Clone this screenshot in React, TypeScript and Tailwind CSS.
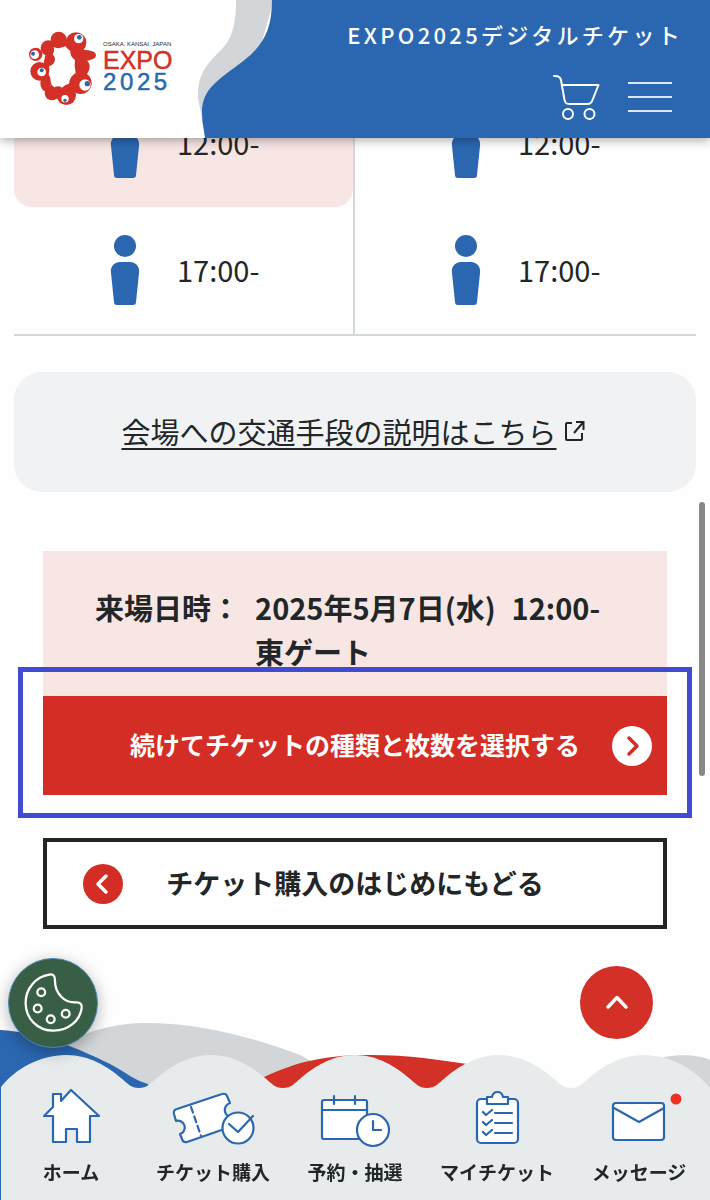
import type { ReactNode } from "react";

const slots = ["12:00-", "17:00-"];

export default function App() {
  return (
    <div className="min-h-screen bg-[#fefefe] text-[#222627] font-['Noto_Sans_CJK_JP','Noto_Sans',sans-serif] flex flex-col overflow-x-hidden">
      <Header />

      <main className="-mt-[58px] px-3.5 pb-[271px]">
        <SlotTable />

        <div className="mt-9 flex h-[120px] items-center justify-center rounded-[28px] bg-[#f0f2f4] pb-0.5 pr-1">
          <a href="#access" className="flex items-center gap-2 text-[29px] leading-10">
            <span className="underline decoration-2 underline-offset-4">会場への交通手段の説明はこちら</span>
            <ExternalIcon />
          </a>
        </div>

        <section className="mx-[29px] mt-[59px]">
          <dl className="flex h-[145px] gap-[15px] bg-[#f8e6e5] pl-[52px] pt-[34px] text-[29px] font-bold leading-[44px]">
            <dt>来場日時：</dt>
            <dd>
              2025年5月7日(水)<span className="ml-4">12:00-</span>
              <br />
              東ゲート
            </dd>
          </dl>

          <div className="relative">
            <button className="grid h-[99px] w-full grid-cols-[40px_1fr_40px] items-center bg-[#d32d26] px-[15px] text-white">
              <span />
              <span className="whitespace-nowrap pb-0.5 text-center text-[25px] font-bold">
                続けてチケットの種類と枚数を選択する
              </span>
              <Round className="bg-white text-[#d32d26]">
                <path d="M17 12l8 8-8 8" />
              </Round>
            </button>
            <div className="pointer-events-none absolute -inset-x-[25px] -bottom-[23px] -top-[29px] border-[5px] border-[#404bd0]" />
          </div>

          <button className="mt-[43px] grid h-[91px] w-full grid-cols-[40px_1fr_40px] items-center border-4 border-[#222627] px-9">
            <Round className="bg-[#d32d26] text-white">
              <path d="M23 12l-8 8 8 8" />
            </Round>
            <span className="whitespace-nowrap text-center text-[27px] font-bold">
              チケット購入のはじめにもどる
            </span>
            <span />
          </button>
        </section>
      </main>

      <BottomNav />

      <button
        aria-label="Cookie"
        className="fixed bottom-[152px] left-2 z-20 h-[90px] w-[90px] rounded-full border border-[#4a86b8] bg-[#385f45] shadow-[0_4px_16px_rgba(0,0,0,0.3)]"
      >
        <CookieIcon />
      </button>

      <a
        href="#top"
        aria-label="ページの先頭へ"
        className="fixed bottom-[161px] right-[57px] z-20 flex h-[73px] w-[73px] items-center justify-center rounded-full bg-[#d33027]"
      >
        <svg width="24" height="16" viewBox="0 0 24 16" fill="none" stroke="#fff" strokeWidth="3.5" strokeLinecap="round" strokeLinejoin="round">
          <path d="M3 12l9-9.500 9 9.500" />
        </svg>
      </a>

      {/* scroll thumb */}
      <div className="fixed right-[5px] top-[502px] z-20 h-[274px] w-1.5 rounded-full bg-[#888]" />
    </div>
  );
}

function Header() {
  return (
    <header id="top" className="relative z-10 flex h-[138px] bg-white shadow-[0_2px_10px_rgba(0,0,0,0.35)]">
      <a href="#home" aria-label="EXPO 2025" className="flex w-[196px] items-start pl-[29px] pt-[31px]">
        <LogoMark />
        <span className="ml-[7px] flex flex-col whitespace-nowrap pt-[9px] font-['Liberation_Sans',sans-serif]">
          <span className="text-[6px] leading-[9px]">OSAKA, KANSAI, JAPAN</span>
          <span className="text-[25px] leading-[22px] text-[#d33027] [-webkit-text-stroke:0.5px_#d33027]">EXPO</span>
          <span className="text-[24px] leading-[22px] tracking-[0.15em] text-[#2b67b1] [-webkit-text-stroke:0.5px_#2b67b1]">2025</span>
        </span>
      </a>

      <svg className="h-full w-20 shrink-0" viewBox="0 0 80 138" preserveAspectRatio="none">
        <path d="M40 0C40 23 37 38 25 50C14 61 2 72 2 94C2 106 6 110 6 124L40 130L78 0Z" fill="#d2d6d9" />
        <path d="M76 0C76 30 67 46 46 62C24 79 6 88 6 112C6 122 8 130 9 138H80V0Z" fill="#2b67b1" />
      </svg>

      <div className="-ml-px flex flex-1 flex-col items-end bg-[#2b67b1] pt-[18px] text-white">
        <p className="mr-[27px] whitespace-nowrap text-[22px] font-medium leading-8 tracking-[0.15em]">
          EXPO2025デジタルチケット
        </p>
        <div className="mr-[38px] mt-6 flex items-start gap-7">
          <a href="#cart" aria-label="カート">
            <svg width="48" height="48" viewBox="0 0 48 48" fill="none" stroke="currentColor" strokeWidth="2" strokeLinecap="round" strokeLinejoin="round">
              <path d="M2 2c5 0 7 1 7.500 7l3 17c1 3 1.500 4 5 4h18c3 0 4-1 5-4l6-15H10" />
              <circle cx="16" cy="40" r="5" />
              <circle cx="37.500" cy="40" r="5" />
            </svg>
          </a>
          <button aria-label="メニュー" className="mt-2 flex w-11 flex-col gap-3">
            <span className="h-0.5 w-full bg-[#dce8f5]" />
            <span className="h-0.5 w-full bg-[#dce8f5]" />
            <span className="h-0.5 w-full bg-[#dce8f5]" />
          </button>
        </div>
      </div>
    </header>
  );
}

function SlotTable() {
  return (
    <table className="w-full table-fixed border-separate border-spacing-0 border-b-2 border-[#d3d9d9]">
      <tbody>
        {slots.map((time, i) => (
          <tr key={time}>
            <td className="border-r-2 border-[#d3d9d9] p-0">
              <Slot time={time} selected={i === 0} />
            </td>
            <td className="p-0">
              <Slot time={time} />
            </td>
          </tr>
        ))}
      </tbody>
    </table>
  );
}

function Slot({ time, selected }: { time: string; selected?: boolean }) {
  return (
    <div className={`flex h-[127px] items-center gap-[37px] pb-0.5 pl-24 ${selected ? "rounded-b-[18px] bg-[#f8e6e5]" : ""}`}>
      <svg width="30" height="70" viewBox="0 0 30 70" fill="#2b67b1">
        <circle cx="15" cy="11" r="11" />
        <path d="M10 27H20C26 27 30 32 29 38L26 67Q26 70 23 70H7Q4 70 4 67L1 38C0 32 4 27 10 27Z" />
      </svg>
      <span className="pb-0.5 text-[29px] leading-10">{time}</span>
    </div>
  );
}

function BottomNav() {
  return (
    <nav className="fixed inset-x-0 bottom-0 z-10">
      <svg className="absolute inset-0 h-full w-full" viewBox="0 0 710 178" preserveAspectRatio="none">
        <path d="M50 30C85 8 115 1 148 1C200 1 255 16 300 33L320 44V90H50Z" fill="#d2d6d9" />
        <path d="M650 40C664 32 695 31 710 38V90H650Z" fill="#d2d6d9" />
        <path d="M0 8C40 10 80 27 110 42C125 50 136 59 148 62V90H2V178H0Z" fill="#2b67b1" />
        <path d="M264 55C300 38 330 33 370 33C410 33 440 38 467 42L490 60V90H264Z" fill="#d33027" />
        <path
          d="M1 65C15 47 40 33 66 33C90 33 108 45 121 56C127 61 131 66 139 66S151 61 157 56C170 45 188 33 211 33C234 33 252 45 265 56C271 61 275 66 283 66S295 61 301 56C314 45 332 33 355 33C378 33 396 45 409 56C415 61 419 66 427 66S439 61 445 56C458 45 476 33 499 33C522 33 540 45 553 56C559 61 563 66 571 66S583 61 589 56C602 45 620 33 644 33C670 33 695 47 710 66V178H1Z"
          fill="#e7ebec"
        />
      </svg>
      <ul className="relative grid grid-cols-5 pb-3.5 pt-[67px]">
        <NavItem label="ホーム">
          <path d="M30 5h8v7L48 1l28 26h-9v26H54V40H43v13H30V27H21l9-9z" />
        </NavItem>
        <NavItem label="チケット購入">
          <path d="M9 25q-1-4 3-5L57 5q4-1 5 2l3 7a7 7 0 0 0 4 14l2 8-49 17q-4 1-5-3l-2-5a6.500 6.500 0 0 0-4-13z" />
          <path d="M26 18l10 29" strokeDasharray="6 4" />
          <circle cx="73" cy="39" r="15.500" />
          <path d="M64 35l9 8 15-16" fill="none" />
        </NavItem>
        <NavItem label="予約・抽選">
          <rect x="15" y="11" width="45" height="39" rx="2" />
          <path d="M15 21h45M27 7v8M48 7v8" />
          <circle cx="66" cy="41" r="16" />
          <path d="M66 32v9h8" fill="none" />
        </NavItem>
        <NavItem label="マイチケット">
          <rect x="28" y="10" width="41" height="44" rx="4" />
          <path d="M38 15V8h5q1-5 5.500-5T54 8h5v7z" />
          <path d="M46 24h17M46 34h17M46 44h17M34 23l3 3 6-5M34 33l3 3 6-5M34 43l3 3 6-5" fill="none" />
        </NavItem>
        <NavItem label="メッセージ">
          <rect x="22" y="14" width="51" height="37" rx="3" />
          <path d="M23 19l25 14 25-14" />
          <circle cx="85" cy="10" r="5.500" fill="#ea3323" stroke="none" />
        </NavItem>
      </ul>
    </nav>
  );
}

function NavItem({ label, children }: { label: string; children: ReactNode }) {
  return (
    <li>
      <a href="#nav" className="flex flex-col items-center gap-[13px]">
        <svg
          className="overflow-visible"
          width="96"
          height="56"
          viewBox="0 0 96 56"
          fill="#fff"
          stroke="#2b67b1"
          strokeWidth="2.2"
          strokeLinecap="round"
          strokeLinejoin="round"
        >
          {children}
        </svg>
        <span className="whitespace-nowrap text-[19px] font-bold leading-7">{label}</span>
      </a>
    </li>
  );
}

function Round({ className, children }: { className: string; children: ReactNode }) {
  return (
    <span className={`h-10 w-10 rounded-full ${className}`}>
      <svg width="40" height="40" viewBox="0 0 40 40" fill="none" stroke="currentColor" strokeWidth="3.5" strokeLinecap="round" strokeLinejoin="round">
        {children}
      </svg>
    </span>
  );
}

function ExternalIcon() {
  return (
    <svg width="20" height="20" viewBox="0 0 20 20" fill="none" stroke="currentColor" strokeWidth="2">
      <path d="M7 2H2Q1 2 1 3v15q0 1 1 1h14q1 0 1-1v-6M11 1h7.500v8M18 1.500L9 12" />
    </svg>
  );
}

function CookieIcon() {
  return (
    <svg className="h-full w-full" viewBox="23 415 270 270" fill="none" stroke="#fff" strokeWidth="7">
      <path d="M146 463C160 460 165 468 164 482C164 520 192 550 228 548C242 547 248 554 246 566C240 605 205 635 160 635C110 635 74 597 74 550C74 505 105 470 146 463Z" />
      <circle cx="122" cy="517" r="12" />
      <circle cx="111" cy="567" r="12" />
      <circle cx="151" cy="600" r="12" />
      <circle cx="197" cy="583" r="12" />
    </svg>
  );
}

function LogoMark() {
  return (
    <svg width="67" height="74" viewBox="87 92 201 222" className="shrink-0">
      <g fill="#d33027">
        <ellipse cx="186" cy="197" rx="55" ry="74" />
        <circle cx="176" cy="118" r="24" />
        <circle cx="228" cy="127" r="31" />
        <ellipse cx="250" cy="165" rx="38" ry="17" />
        <ellipse cx="246" cy="200" rx="23" ry="26" />
        <circle cx="242" cy="248" r="33" />
        <circle cx="199" cy="285" r="29" />
        <circle cx="156" cy="278" r="22" />
        <ellipse cx="137" cy="247" rx="16" ry="26" />
        <circle cx="119" cy="213" r="28" />
        <circle cx="107" cy="162" r="20" />
        <circle cx="145" cy="143" r="23" />
      </g>
      <path
        d="M161 141Q177 147 196 138Q204 148 211 152Q209 167 225 179Q222 198 227 218Q209 228 207 250Q196 252 186 262Q176 254 163 261Q152 254 152 243Q152 232 146 222Q150 210 147 198Q164 193 165 177Q164 168 158 162Q165 152 161 141Z"
        fill="#fff"
      />
      <g fill="#fff">
        <circle cx="236" cy="115" r="14" />
        <circle cx="104" cy="163" r="13" />
        <circle cx="125" cy="215" r="13" />
        <circle cx="255" cy="254" r="17" />
        <circle cx="195" cy="295" r="11" />
      </g>
      <g fill="#2b67b1">
        <circle cx="238" cy="111" r="7" />
        <circle cx="99" cy="160" r="6" />
        <circle cx="125" cy="210" r="6" />
        <circle cx="262" cy="250" r="8" />
        <circle cx="195" cy="300" r="5" />
      </g>
    </svg>
  );
}
